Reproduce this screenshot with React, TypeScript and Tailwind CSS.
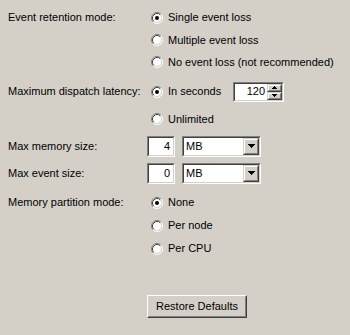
import React from "react";

const FONT = { fontFamily: '"Liberation Sans", Tahoma, Arial, sans-serif' };

function Radio({ checked, label }: { checked?: boolean; label: string }) {
  return (
    <div className="flex items-center ml-[4px] gap-[5px]">
      <svg width="12" height="12" viewBox="0 0 12 12" className="shrink-0">
        <circle cx="6" cy="6" r="5" fill="#ffffff" />
        <path d="M2.11 9.89 A5.5 5.5 0 0 1 9.89 2.11" fill="none" stroke="#808080" strokeWidth="1" />
        <path d="M9.89 2.11 A5.5 5.5 0 0 1 2.11 9.89" fill="none" stroke="#ffffff" strokeWidth="1" />
        <path d="M2.82 9.18 A4.5 4.5 0 0 1 9.18 2.82" fill="none" stroke="#404040" strokeWidth="1" />
        <path d="M9.18 2.82 A4.5 4.5 0 0 1 2.82 9.18" fill="none" stroke="#d4d0c8" strokeWidth="1" />
        {checked && <circle cx="6" cy="6" r="2" fill="#000000" />}
      </svg>
      <span>{label}</span>
    </div>
  );
}

function Sunken({ className, children }: { className?: string; children: React.ReactNode }) {
  return (
    <div className={`border border-t-[#808080] border-l-[#808080] border-b-white border-r-white ${className ?? ""}`}>
      <div className="h-full border border-t-[#404040] border-l-[#404040] border-b-[#d4d0c8] border-r-[#d4d0c8] bg-white flex items-center">
        {children}
      </div>
    </div>
  );
}

function Raised({ className, children }: { className?: string; children: React.ReactNode }) {
  return (
    <div className={`border border-t-[#d4d0c8] border-l-[#d4d0c8] border-b-[#404040] border-r-[#404040] bg-[#d4d0c8] ${className ?? ""}`}>
      <div className="h-full border border-t-white border-l-white border-b-[#808080] border-r-[#808080] flex items-center justify-center">
        {children}
      </div>
    </div>
  );
}

function Arrow({ up, w = 7 }: { up?: boolean; w?: number }) {
  const h = Math.ceil(w / 2);
  return (
    <svg width={w} height={h} viewBox={`0 0 ${w} ${h}`} shapeRendering="crispEdges">
      <polygon points={up ? `0,${h} ${w},${h} ${w / 2},0` : `0,0 ${w},0 ${w / 2},${h}`} fill="#000" />
    </svg>
  );
}

function Combo() {
  return (
    <Sunken className="w-[79px] h-[21px]">
      <span className="flex-1 pl-[2px]">MB</span>
      <Raised className="w-[16px] h-[17px]">
        <Arrow />
      </Raised>
    </Sunken>
  );
}

function NumBox({ value }: { value: string }) {
  return (
    <Sunken className="w-[28px] h-[21px]">
      <span className="flex-1 text-right pr-[3px]">{value}</span>
    </Sunken>
  );
}

export default function App() {
  return (
    <div className="w-[350px] h-[335px] bg-[#d4d0c8] text-[11px] text-black pl-[8px] pt-[6px]" style={FONT}>
      <div className="grid grid-cols-[139px_1fr]">
        <div className="h-[23px] flex items-center">Event retention mode:</div>
        <div className="flex flex-col">
          <div className="h-[23px] flex items-center"><Radio checked label="Single event loss" /></div>
          <div className="h-[22px] flex items-center"><Radio label="Multiple event loss" /></div>
          <div className="h-[22px] flex items-center"><Radio label="No event loss (not recommended)" /></div>
        </div>
      </div>

      <div className="grid grid-cols-[139px_1fr] mt-[7px]">
        <div className="h-[23px] flex items-center">Maximum dispatch latency:</div>
        <div className="flex flex-col gap-[5px]">
          <div className="h-[23px] flex items-center">
            <div className="w-[86px]"><Radio checked label="In seconds" /></div>
            <Sunken className="w-[51px] h-[20px]">
              <span className="flex-1 text-right pr-[2px]">120</span>
              <div className="flex flex-col">
                <Raised className="w-[15px] h-[8px]"><Arrow up w={5} /></Raised>
                <Raised className="w-[15px] h-[8px]"><Arrow w={5} /></Raised>
              </div>
            </Sunken>
          </div>
          <div className="h-[22px] flex items-center"><Radio label="Unlimited" /></div>
        </div>
      </div>

      <div className="grid grid-cols-[139px_1fr] mt-[5px]">
        <div className="h-[22px] flex items-center">Max memory size:</div>
        <div className="h-[22px] flex items-center gap-[7px]">
          <NumBox value="4" />
          <Combo />
        </div>
      </div>

      <div className="grid grid-cols-[139px_1fr] mt-[5px]">
        <div className="h-[22px] flex items-center">Max event size:</div>
        <div className="h-[22px] flex items-center gap-[7px]">
          <NumBox value="0" />
          <Combo />
        </div>
      </div>

      <div className="grid grid-cols-[139px_1fr] mt-[7px]">
        <div className="h-[23px] flex items-center">Memory partition mode:</div>
        <div className="flex flex-col">
          <div className="h-[23px] flex items-center"><Radio checked label="None" /></div>
          <div className="h-[23px] flex items-center"><Radio label="Per node" /></div>
          <div className="h-[23px] flex items-center"><Radio label="Per CPU" /></div>
        </div>
      </div>

      <div className="grid grid-cols-[139px_1fr] mt-[35px]">
        <div />
        <div className="border border-t-white border-l-white border-b-[#404040] border-r-[#404040] w-[100px] h-[23px]">
          <div className="h-full border border-transparent border-b-[#808080] border-r-[#808080] flex items-center justify-center">
            Restore Defaults
          </div>
        </div>
      </div>
    </div>
  );
}
